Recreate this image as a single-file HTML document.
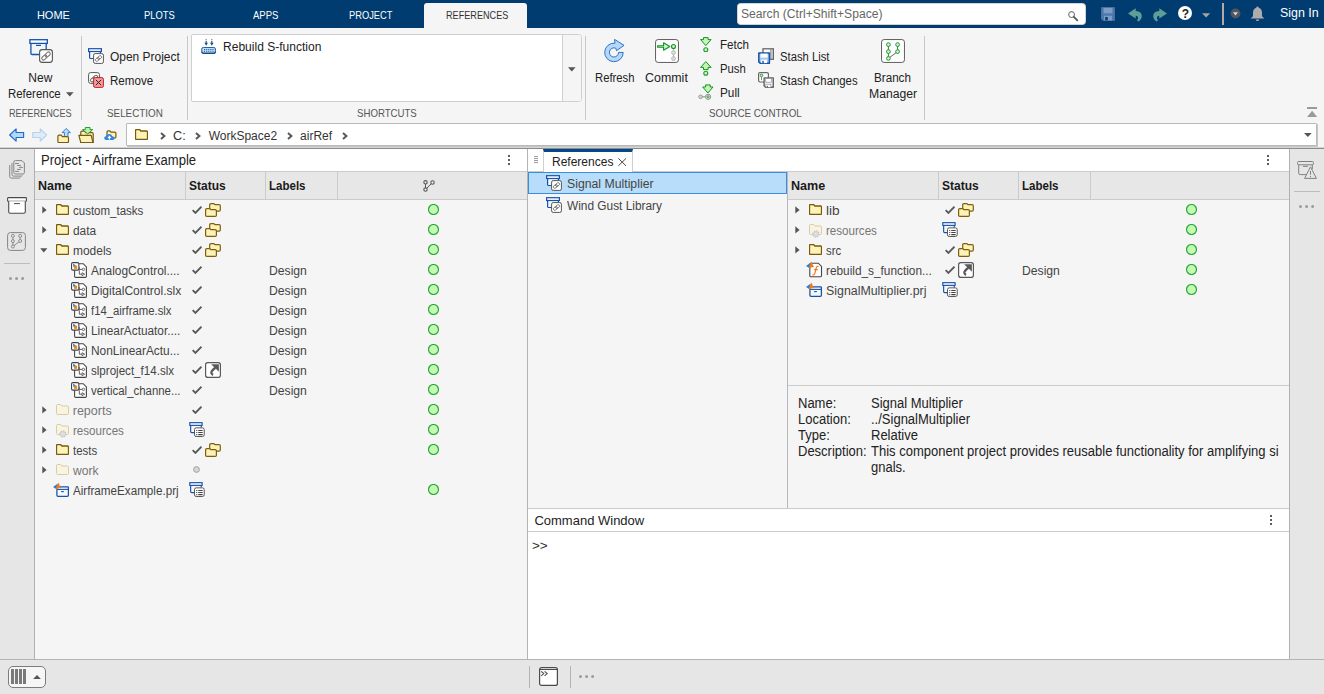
<!DOCTYPE html>
<html><head><meta charset="utf-8"><title>MATLAB</title>
<style>
html,body{margin:0;padding:0;}
body{width:1324px;height:694px;overflow:hidden;position:relative;background:#f5f5f5;font-family:"Liberation Sans",sans-serif;}
.t{position:absolute;white-space:nowrap;transform-origin:0 50%;display:block;}
.r{position:absolute;display:block;box-sizing:border-box;}
</style></head><body>
<svg width="0" height="0" style="position:absolute;left:-10px;top:-10px" aria-hidden="true">
<defs>
<!-- generic folder 13x11 -->
<symbol id="folder" viewBox="0 0 13 11" overflow="visible">
<path d="M0.5 1.6 Q0.5 0.5 1.6 0.5 H4.6 L5.9 2 H11.4 Q12.5 2 12.5 3.1 V9.4 Q12.5 10.5 11.4 10.5 H1.6 Q0.5 10.5 0.5 9.4 Z" fill="#fdf2b8" stroke="#785a0a" stroke-width="1.3"/>
</symbol>
<symbol id="folderf" viewBox="0 0 13 11" overflow="visible">
<path d="M0.5 1.6 Q0.5 0.5 1.6 0.5 H4.6 L5.9 2 H11.4 Q12.5 2 12.5 3.1 V9.4 Q12.5 10.5 11.4 10.5 H1.6 Q0.5 10.5 0.5 9.4 Z" fill="#f9f4df" stroke="#d6cda8" stroke-width="1"/>
</symbol>
<symbol id="folderg" viewBox="0 0 13 14" overflow="visible">
<path d="M0.5 1.6 Q0.5 0.5 1.6 0.5 H4.6 L5.9 2 H11.4 Q12.5 2 12.5 3.1 V9.4 Q12.5 10.5 11.4 10.5 H1.6 Q0.5 10.5 0.5 9.4 Z" fill="#f9f4df" stroke="#d6cda8" stroke-width="1"/>
<circle cx="6.9" cy="10" r="3.1" fill="#e6e6e6" stroke="#c2c2c2" stroke-width="1.1" stroke-dasharray="1.4 1"/>
<circle cx="6.9" cy="10" r="2.5" fill="#e2e2e2" stroke="#c6c6c6" stroke-width="0.6"/>
<circle cx="6.9" cy="10" r="1" fill="#f8f8f8" stroke="#c2c2c2" stroke-width="0.5"/>
</symbol>
<!-- double folder status 16x14 -->
<symbol id="dfolder" viewBox="0 0 16 14" overflow="visible">
<path d="M4.7 1.8 Q4.7 0.6 5.9 0.6 H8.8 L10 1.7 H14.1 Q15.3 1.7 15.3 2.9 V7 Q15.3 8.2 14.1 8.2 H5.9 Q4.7 8.2 4.7 7 Z" fill="#fdf2b8" stroke="#7d5f0c" stroke-width="1.2"/>
<path d="M0.6 6.8 Q0.6 5.6 1.8 5.6 H4.7 L5.9 6.7 H10.2 Q11.4 6.7 11.4 7.9 V12.2 Q11.4 13.4 10.2 13.4 H1.8 Q0.6 13.4 0.6 12.2 Z" fill="#fdf2b8" stroke="#7d5f0c" stroke-width="1.2"/>
</symbol>
<!-- check -->
<symbol id="check" viewBox="0 0 10 8" overflow="visible">
<path d="M0.6 4.1 L3.4 6.9 L9.5 0.7" fill="none" stroke="#5a5a5a" stroke-width="1.9"/>
</symbol>
<!-- green circle -->
<symbol id="gcirc" viewBox="0 0 11 11" overflow="visible">
<circle cx="5.5" cy="5.5" r="5" fill="#c3fbb3" stroke="#2ba83b" stroke-width="1.2"/>
</symbol>
<symbol id="scirc" viewBox="0 0 7 7" overflow="visible">
<circle cx="3.5" cy="3.5" r="2.9" fill="#d6d6d6" stroke="#9c9c9c" stroke-width="0.9"/>
</symbol>
<!-- tree arrows -->
<symbol id="arrr" viewBox="0 0 5 8" overflow="visible"><path d="M0.3 0.2 L4.8 4 L0.3 7.8 Z" fill="#555"/></symbol>
<symbol id="arrd" viewBox="0 0 8 5" overflow="visible"><path d="M0.2 0.3 L7.8 0.3 L4 4.8 Z" fill="#555"/></symbol>
<!-- slx model icon 16x16 -->
<symbol id="slx" viewBox="0 0 16 16" overflow="visible">
<path d="M7.9 1.7 H12.2 L15.4 4.9 V14.3 Q15.4 15.4 14.3 15.4 H4.7 Q3.6 15.4 3.6 14.3 V8" fill="#fff" stroke="#444" stroke-width="1.1"/>
<rect x="0.55" y="0.65" width="7.3" height="7.5" rx="1.3" fill="#fff" stroke="#444" stroke-width="1.1"/>
<path d="M2 1.7 L5 3.3 L2.4 5 Z" fill="#1f7fd8"/>
<rect x="3" y="3.7" width="3.1" height="3.1" fill="#e8861c"/>
<path d="M8.3 8.2 V12.2 H10.8 M8.3 7.4 H11.2" fill="none" stroke="#5a5a5a" stroke-width="1"/>
<path d="M8.3 5 V8" stroke="#5a5a5a" stroke-width="1"/>
<circle cx="12.4" cy="7.4" r="1.2" fill="#fff" stroke="#5a5a5a" stroke-width="0.9"/>
<path d="M11 10.7 L13.7 12.2 L11 13.7 Z" fill="#fff" stroke="#5a5a5a" stroke-width="0.9" stroke-linejoin="round"/>
</symbol>
<!-- prj icon 15x15 -->
<symbol id="prj" viewBox="0 0 17 16" overflow="visible">
<path d="M3.9 5.6 Q3.9 4.9 4.6 4.9 H14.7 Q15.4 4.9 15.4 5.6 V13.2 Q15.4 14.3 14.3 14.3 H5 Q3.9 14.3 3.9 13.2 Z" fill="#f4f8fd" stroke="#1552ab" stroke-width="1.25"/>
<path d="M3.9 7.4 H15.4" stroke="#1552ab" stroke-width="1.1"/>
<path d="M8.1 9.6 H10.9" stroke="#1552ab" stroke-width="1.1"/>
<path d="M0 5.1 L4.9 1.6 L3.2 7 Z" fill="#1f7fd8"/>
<path d="M5.5 0.8 L8 6.3 L5.8 6.1 L3.8 8.1 L3.1 7 L3.5 4.4 L4.4 2.2 Z" fill="#f07a1e"/>
</symbol>
<!-- m function file -->
<symbol id="mfile" viewBox="0 0 17 17" overflow="visible">
<path d="M3.8 3.3 Q3.8 2.2 4.9 2.2 H12.3 L15.5 5.4 V14.7 Q15.5 15.8 14.4 15.8 H4.9 Q3.8 15.8 3.8 14.7 Z" fill="#fff" stroke="#444" stroke-width="1.1"/>
<path d="M0 5.1 L4.9 1.6 L3.2 7 Z" fill="#1f7fd8"/>
<path d="M5.5 0.8 L8 6.3 L5.8 6.1 L3.8 8.1 L3.1 7 L3.5 4.4 L4.4 2.2 Z" fill="#f07a1e"/>
<path d="M12.6 5.6 Q10.8 4.7 10.2 7 L8.8 12.5 Q8.2 14.5 6.5 13.8 M8.1 8.6 H11.8" fill="none" stroke="#f07a1e" stroke-width="1.15"/>
</symbol>
<!-- shortcut status 16x16 -->
<symbol id="shortcut" viewBox="0 0 16 16" overflow="visible">
<rect x="0.6" y="0.6" width="14.8" height="14.8" rx="2.2" fill="#fff" stroke="#585858" stroke-width="1.2"/>
<path d="M6.1 2.2 H13.9 V9.7 Z" fill="#5a5a5a"/>
<path d="M10.4 5.8 Q6 9.2 6.4 11 Q6.8 12.3 8.1 12.8" fill="none" stroke="#5a5a5a" stroke-width="2.4"/>
</symbol>
<!-- project doc status 16x16 -->
<symbol id="pdoc" viewBox="0 0 16 16" overflow="visible">
<path d="M1.5 3.4 V10 Q1.5 11 2.5 11 H6 V5.6 H12.5 V3.4 Z" fill="#f4f8fd"/>
<path d="M1.5 3.4 V10 Q1.5 11 2.5 11 H6 M12.5 3.4 V5.6" fill="none" stroke="#1552ab" stroke-width="1.2"/>
<rect x="0.6" y="0.7" width="12.8" height="2.8" fill="#fff" stroke="#1552ab" stroke-width="1.2"/>
<rect x="5.5" y="6.1" width="10.1" height="9" rx="1.8" fill="#fff" stroke="#505050"/>
<path d="M7.3 8.9 H8.4 M9.4 8.9 H14 M7.3 11 H8.4 M9.4 11 H14 M7.3 13.1 H8.4 M9.4 13.1 H14" stroke="#444" stroke-width="1.1"/>
</symbol>
<!-- project link 16 -->
<symbol id="plink16" viewBox="0 0 16 16" overflow="visible">
<path d="M1.6 3.5 V9.4 Q1.6 10.5 2.7 10.5 H6 V5.6 H12.4 V3.5 Z" fill="#f4f8fd"/>
<path d="M1.6 3.5 V9.4 Q1.6 10.5 2.7 10.5 H6 M12.4 3.5 V5.6" fill="none" stroke="#1552ab" stroke-width="1.2"/>
<rect x="0.6" y="0.7" width="12.8" height="2.8" fill="#fff" stroke="#1552ab" stroke-width="1.2"/>
<rect x="5.6" y="5.6" width="9.8" height="9.8" rx="1.6" fill="#fff" stroke="#555"/>
<g transform="rotate(-40 10.5 10.5)" fill="none" stroke="#777" stroke-width="0.9"><rect x="6.9" y="9.1" width="4.4" height="2.8" rx="1.4"/><rect x="9.7" y="9.1" width="4.4" height="2.8" rx="1.4"/></g>
</symbol>
<!-- project link 24 -->
<symbol id="plink24" viewBox="0 0 24 24" overflow="visible">
<path d="M1.9 4.4 V14.2 Q1.9 15.5 3.2 15.5 H10.4 V10.4 H17.2 V4.4 Z" fill="#f1f6fd"/>
<path d="M1.9 4.4 V14.2 Q1.9 15.5 3.2 15.5 H10.4 M17.2 4.4 V10.4" fill="none" stroke="#1552ab" stroke-width="1.3"/>
<rect x="0.9" y="0.7" width="17.4" height="3.7" fill="#fff" stroke="#1552ab" stroke-width="1.3"/>
<path d="M7 6.4 H12" stroke="#1552ab" stroke-width="1.2"/>
<rect x="10.6" y="10.6" width="12.8" height="12.8" rx="2.6" fill="#fff" stroke="#555" stroke-width="1.1"/>
<g transform="rotate(-42 17 17)" fill="none" stroke="#777" stroke-width="1.05"><rect x="11.9" y="15.3" width="5.8" height="3.4" rx="1.7"/><rect x="16.3" y="15.3" width="5.8" height="3.4" rx="1.7"/></g>
</symbol>
<!-- remove 16 -->
<symbol id="remove16" viewBox="0 0 16 16" overflow="visible">
<rect x="0.6" y="0.6" width="10.8" height="10.8" rx="2" fill="#fff" stroke="#555"/>
<g transform="rotate(-40 6 6.6)" fill="none" stroke="#6a6a6a" stroke-width="1"><rect x="1.8" y="5" width="5" height="3.2" rx="1.6"/><rect x="5.2" y="5" width="5" height="3.2" rx="1.6"/></g>
<rect x="5.6" y="5.6" width="9.8" height="9.8" rx="1.6" fill="#f7999d" stroke="#b8242c"/>
<path d="M7.8 7.8 L13.2 13.2 M13.2 7.8 L7.8 13.2" stroke="#3a1a1a" stroke-width="1"/>
</symbol>
<!-- rebuild -->
<symbol id="rebuild" viewBox="0 0 16 16" overflow="visible">
<path d="M5.3 0.2 V1.2 M5.3 2 V4.6 M11.1 0.2 V1.2 M11.1 2 V4.6" stroke="#1a4a80" stroke-width="1.1"/>
<path d="M3.5 3.9 H7.1 L5.3 7 Z M9.3 3.9 H12.9 L11.1 7 Z" fill="#1a4a80"/>
<rect x="0.8" y="8.7" width="14" height="5.9" rx="1.6" fill="#bcdcf7" stroke="#1d5ca0"/>
<path d="M0.8 12.8 Q0.8 14.7 2.4 14.7 H13.2 Q14.8 14.7 14.8 12.8" fill="none" stroke="#154a82" stroke-width="1.3"/>
<path d="M3.2 10.8 H12.8 M3.2 12.6 H12.8" stroke="#1a4a80" stroke-width="1" stroke-dasharray="1 1.15"/>
</symbol>
<!-- refresh 24 -->
<symbol id="refresh" viewBox="0 0 21 24" overflow="visible">
<path d="M10.56 0.4 L20.3 6.5 L12.6 12 L11.9 9.5 A4.7 4.7 0 1 0 14.65 13.8 L19.45 13.8 A9.5 9.5 0 1 1 11 4.35 Z" fill="#b4d8f7" stroke="#2c6fc4" stroke-width="1" stroke-linejoin="round"/>
</symbol>
<!-- commit 24 -->
<symbol id="commit" viewBox="0 0 24 24" overflow="visible">
<rect x="0.55" y="0.55" width="22.9" height="22.9" rx="2.6" fill="#fff" stroke="#5e5e5e" stroke-width="1"/>
<path d="M18.5 9 V19" stroke="#b0b0b0" stroke-width="1"/>
<circle cx="18.5" cy="13.6" r="2" fill="#dadada" stroke="#b4b4b4" stroke-width="0.8"/>
<circle cx="18.5" cy="19.6" r="2" fill="#dadada" stroke="#b4b4b4" stroke-width="0.8"/>
<circle cx="18.5" cy="7.5" r="2" fill="#c9f7b8" stroke="#13912a" stroke-width="1.1"/>
<path d="M2.6 6.7 H8.6 V3.8 L14.8 7.5 L8.6 11.2 V8.3 H2.6 Z" fill="#d0fac2" stroke="#13912a" stroke-width="1.1" stroke-linejoin="round"/>
</symbol>
<!-- fetch/push/pull -->
<symbol id="fetch" viewBox="0 0 12 15" overflow="visible">
<path d="M3.5 0.6 H8.1 V2.6 H11.1 L5.8 8.6 L0.6 2.6 H3.5 Z" fill="#c4f6b2" stroke="#13912a" stroke-linejoin="round"/>
<circle cx="5.8" cy="12.8" r="2" fill="#c9f7b8" stroke="#1f9a2e" stroke-width="1.1"/>
</symbol>
<symbol id="push" viewBox="0 0 12 15" overflow="visible">
<path d="M5.8 0.6 L11.1 6.4 H8.1 V8.6 H3.5 V6.4 H0.6 Z" fill="#c4f6b2" stroke="#13912a" stroke-linejoin="round"/>
<circle cx="5.8" cy="12.3" r="2" fill="#c9f7b8" stroke="#1f9a2e" stroke-width="1.1"/>
</symbol>
<symbol id="pull" viewBox="0 0 16 16" overflow="visible">
<path d="M7.6 0.9 H12.2 V3 H15 L9.9 9 L4.7 3 H7.6 Z" fill="#c4f6b2" stroke="#13912a" stroke-linejoin="round"/>
<path d="M4 12.8 H7.4" stroke="#8e8e8e" stroke-width="1"/>
<circle cx="2.6" cy="12.8" r="1.8" fill="#d4d4d4" stroke="#8e8e8e" stroke-width="0.9"/>
<circle cx="10.1" cy="12.8" r="2.6" fill="#f0f0f0" stroke="#8e8e8e" stroke-width="1"/>
<circle cx="10.1" cy="12.8" r="1.1" fill="#c9f7b8" stroke="#1f9a2e" stroke-width="0.9"/>
</symbol>
<!-- floppy pieces -->
<symbol id="stashlist" viewBox="0 0 16 16" overflow="visible">
<rect x="5" y="0.8" width="10.5" height="10.5" fill="#fff" stroke="#666" stroke-width="1.3"/>
<path d="M12.7 1 V11 M14 1 V11" stroke="#8a8a8a" stroke-width="0.9"/>
<path d="M0.8 4.9 H11.4 V15.3 H2.2 L0.8 13.9 Z" fill="#a8c8f0" stroke="#1552ab" stroke-width="1.5" stroke-linejoin="round"/>
<rect x="2.6" y="5.6" width="7" height="4" fill="#fff"/>
<rect x="3.2" y="11.7" width="5.8" height="3.4" fill="#fff"/>
<rect x="4.3" y="12.8" width="1.4" height="2.4" fill="#1552ab"/>
</symbol>
<symbol id="stashch" viewBox="0 0 16 16" overflow="visible">
<rect x="0.6" y="0.6" width="9.8" height="9.4" rx="1.4" fill="#fff" stroke="#666" stroke-width="1.2"/>
<path d="M3.5 4.8 V8.2" stroke="#8a8a8a" stroke-width="1"/>
<circle cx="3.5" cy="3.4" r="1.3" fill="#c9f7b8" stroke="#13912a" stroke-width="0.9"/>
<path d="M6.1 5.9 H15.3 V15.2 H7.5 L6.1 13.8 Z" fill="#efefef" stroke="#666" stroke-width="1.4" stroke-linejoin="round"/>
<rect x="7.8" y="6.6" width="5.8" height="3.6" fill="#fff" stroke="#808080" stroke-width="0.6"/>
<rect x="7.9" y="12.7" width="5" height="2.5" fill="#fff" stroke="#808080" stroke-width="0.5"/>
<rect x="8.8" y="13.9" width="1.1" height="1.4" fill="#555"/>
</symbol>
<!-- branch manager 24 -->
<symbol id="branch" viewBox="0 0 24 24" overflow="visible">
<rect x="0.55" y="0.55" width="22.9" height="22.9" rx="2.6" fill="#fff" stroke="#5e5e5e" stroke-width="1"/>
<path d="M7.4 5.6 V19.4 M16.6 5.6 V12.6 L7.4 19.4" fill="none" stroke="#555" stroke-width="0.9"/>
<g fill="#c9f7b8" stroke="#13912a" stroke-width="0.9"><circle cx="7.4" cy="5.6" r="1.9"/><circle cx="7.4" cy="12.6" r="1.9"/><circle cx="7.4" cy="19.4" r="1.9"/><circle cx="16.6" cy="5.6" r="1.9"/><circle cx="16.6" cy="12.6" r="1.9"/></g>
</symbol>
<!-- nav arrows -->
<symbol id="navback" viewBox="0 0 16 14" overflow="visible">
<path d="M7.4 0.7 L0.7 7 L7.4 13.3 V9.6 H15.2 V4.4 H7.4 Z" fill="#b4d8f7" stroke="#2469c7" stroke-width="1.2" stroke-linejoin="round"/>
</symbol>
<symbol id="navfwd" viewBox="0 0 16 14" overflow="visible">
<path d="M8.6 0.7 L15.3 7 L8.6 13.3 V9.6 H0.8 V4.4 H8.6 Z" fill="#dfecf8" stroke="#b8d0ea" stroke-width="1.2" stroke-linejoin="round"/>
</symbol>
<symbol id="upfolder" viewBox="0 0 14 15.6" overflow="visible">
<path d="M9.2 0.5 L13.4 4.6 H11 V8.6 H7.4 V4.6 H5.1 Z" fill="#b5defc" stroke="#2d6fcf" stroke-width="0.9" stroke-linejoin="round"/>
<path d="M0.9 8.2 Q0.9 7.1 2 7.1 H4.2 L5.4 8.6 H10.4 Q11.5 8.6 11.5 9.7 V13.6 Q11.5 14.7 10.4 14.7 H2 Q0.9 14.7 0.9 13.6 Z" fill="#fdf2b8" stroke="#785a0a" stroke-width="1.2"/>
</symbol>
<symbol id="browsefolder" viewBox="0 0 16 16.5" overflow="visible">
<path d="M2.8 5.3 Q2.8 4.2 3.9 4.2 H6.6 L7.8 5.6 H14.1 Q15.2 5.6 15.2 6.7 V15.7 H2.8 Z" fill="#fdf2b8" stroke="#785a0a" stroke-width="1.2"/>
<path d="M7.3 0.5 H12 V2.6 H14.7 L9.65 7 L4.6 2.6 H7.3 Z" fill="#b9f2a4" stroke="#1a8f2a" stroke-width="0.9" stroke-linejoin="round"/>
<path d="M0.9 8.4 H13.2 L15 15.7 H2.8 Z" fill="#fdf2b8" stroke="#785a0a" stroke-width="1.2" stroke-linejoin="round"/>
</symbol>
<symbol id="cloudfolder" viewBox="0 0 13 10.5" overflow="visible">
<path d="M3 1.9 Q3 0.8 4.1 0.8 H5.8 L7 2.1 H10.8 Q11.9 2.1 11.9 3.2 V6.9 Q11.9 8 10.8 8 H3 Z" fill="#fdf2b8" stroke="#785a0a" stroke-width="1.2"/>
<path d="M2.4 9.9 Q0.2 9.9 0.2 7.9 Q0.3 6.3 2 6.2 Q2.8 4.1 5.2 4.1 Q7.6 4.2 8.2 6.3 Q10.6 6.4 10.6 8.2 Q10.5 9.9 8.6 9.9 Z" fill="#2e86de"/>
<path d="M5.4 5.6 L7.4 8 H6.1 V9.6 H4.7 V8 H3.4 Z" fill="#fff"/>
</symbol>
<symbol id="chev" viewBox="0 0 6 8" overflow="visible"><path d="M1 1 L4.4 4 L1 7" fill="none" stroke="#585858" stroke-width="2"/></symbol>
<symbol id="dd" viewBox="0 0 8 5" overflow="visible"><path d="M0.2 0.3 H7.8 L4 4.6 Z" fill="#555"/></symbol>
<!-- top-bar icons -->
<symbol id="mag" viewBox="0 0 11 11" overflow="visible">
<circle cx="3.6" cy="3.6" r="2.9" fill="none" stroke="#808080" stroke-width="1.2"/>
<path d="M5.9 5.9 L9.3 9.3" stroke="#5a5a5a" stroke-width="1.9" stroke-linecap="round"/>
</symbol>
<symbol id="save" viewBox="0 0 14 14" overflow="visible">
<path d="M0.5 0.5 H13.5 V13.5 H2 L0.5 12 Z" fill="#4e78aa" stroke="#456f9f" stroke-width="1"/>
<rect x="2.6" y="0.9" width="8.8" height="5.4" fill="#7c9ec4"/>
<rect x="3" y="8.8" width="8" height="4.6" fill="#7c9ec4"/>
<rect x="4.2" y="10" width="2.6" height="3.4" fill="#0d3d6e"/>
</symbol>
<symbol id="undo" viewBox="0 0 14 14" overflow="visible">
<path d="M0 5.4 L7.7 0.2 V3 Q13.8 3.2 13.8 8.2 Q13.6 11.6 10.4 13.4 L9 12.2 Q10.8 10.4 9.8 8.8 Q9.2 7.8 7.7 7.8 V10.4 Z" fill="#5f9e96"/>
</symbol>
<symbol id="redo" viewBox="0 0 14 14" overflow="visible">
<path d="M14 5.4 L6.3 0.2 V3 Q0.2 3.2 0.2 8.2 Q0.4 11.6 3.6 13.4 L5 12.2 Q3.2 10.4 4.2 8.8 Q4.8 7.8 6.3 7.8 V10.4 Z" fill="#5f9e96"/>
</symbol>
<symbol id="bell" viewBox="0 0 15 15" overflow="visible">
<path d="M7.5 0.4 Q8.6 0.4 8.7 1.5 Q12 2.6 12 6.6 V10 L14.4 12.4 H0.6 L3 10 V6.6 Q3 2.6 6.3 1.5 Q6.4 0.4 7.5 0.4 Z" fill="#adadad"/>
<path d="M5.6 13.2 H9.4 Q9 14.8 7.5 14.8 Q6 14.8 5.6 13.2 Z" fill="#adadad"/>
</symbol>
<!-- kebab -->
<symbol id="kebab" viewBox="0 0 2 10" overflow="visible"><rect x="0" y="0" width="2" height="2" fill="#5c5c5c"/><rect x="0" y="4" width="2" height="2" fill="#5c5c5c"/><rect x="0" y="8" width="2" height="2" fill="#5c5c5c"/></symbol>
<symbol id="hdots" viewBox="0 0 15 3" overflow="visible"><circle cx="1.5" cy="1.5" r="1.5" fill="#9c9c9c"/><circle cx="7.55" cy="1.5" r="1.5" fill="#9c9c9c"/><circle cx="13.6" cy="1.5" r="1.5" fill="#9c9c9c"/></symbol>
<!-- git header icon -->
<symbol id="gith" viewBox="0 0 13 13" overflow="visible">
<path d="M2.5 4 V8 M3.7 8.3 L8.3 3.7" fill="none" stroke="#5a5a5a" stroke-width="1"/>
<circle cx="2.5" cy="2.3" r="1.7" fill="#ececec" stroke="#5a5a5a" stroke-width="1.1"/>
<circle cx="2.5" cy="9.6" r="1.7" fill="#ececec" stroke="#5a5a5a" stroke-width="1.1"/>
<circle cx="9.5" cy="2.5" r="1.7" fill="#ececec" stroke="#5a5a5a" stroke-width="1.1"/>
</symbol>
<!-- left sidebar icons -->
<symbol id="sdocs" viewBox="0 0 17 19" overflow="visible">
<path d="M0.7 5 V16.6 Q0.7 18.1 2.2 18.1 H10.4 L11.6 17" fill="none" stroke="#858585" stroke-width="1"/>
<path d="M3 3 V14.6 Q3 16.1 4.5 16.1 H12.4 L13.6 15" fill="none" stroke="#858585" stroke-width="1"/>
<path d="M4.8 2.1 Q4.8 0.6 6.3 0.6 H13 L15.4 3 V12.5 Q15.4 14 13.9 14 H6.3 Q4.8 14 4.8 12.5 Z" fill="#e6e6e6" stroke="#858585" stroke-width="1"/>
<path d="M6.1 3.5 H9.9 M8.1 5.45 H11.9 M10.1 7.4 H13.9 M8.1 9.4 H11.9 M6.1 11.4 H9.9" stroke="#858585" stroke-width="1"/>
</symbol>
<symbol id="sbox" viewBox="0 0 20 17" overflow="visible">
<rect x="0.6" y="0.6" width="18.8" height="3.7" rx="0.6" fill="#fff" stroke="#4a4a4a" stroke-width="1.1"/>
<path d="M1.7 4.3 V14.8 Q1.7 16.3 3.2 16.3 H16.8 Q18.3 16.3 18.3 14.8 V4.3" fill="#fff" stroke="#4a4a4a" stroke-width="1.1"/>
<path d="M7 6.6 H13" stroke="#4a4a4a" stroke-width="1"/>
</symbol>
<symbol id="sbranch" viewBox="0 0 19 19" overflow="visible">
<rect x="0.6" y="0.6" width="17.8" height="17.8" rx="2.8" fill="#e6e6e6" stroke="#858585" stroke-width="1"/>
<path d="M5.9 4 V14.4 M13.2 4 V9 L5.9 14.4" fill="none" stroke="#858585" stroke-width="0.9"/>
<g fill="#e6e6e6" stroke="#858585" stroke-width="0.9"><circle cx="5.9" cy="3.9" r="1.5"/><circle cx="5.9" cy="9.1" r="1.5"/><circle cx="5.9" cy="14.5" r="1.5"/><circle cx="13.2" cy="3.9" r="1.5"/><circle cx="13.2" cy="9" r="1.5"/></g>
</symbol>
<symbol id="swarn" viewBox="0 0 20 18" overflow="visible">
<rect x="0.6" y="0.5" width="15.8" height="3.3" rx="0.9" fill="#e6e6e6" stroke="#808080" stroke-width="1"/>
<path d="M1.7 3.8 V12.2 Q1.7 13.6 3.1 13.6 H9.6 M15.3 3.8 V8" fill="none" stroke="#808080" stroke-width="1"/>
<path d="M6 5.3 H11" stroke="#808080" stroke-width="1"/>
<path d="M13.5 5.9 L19.4 17.4 H7.6 Z" fill="#e6e6e6" stroke="#808080" stroke-width="1" stroke-linejoin="round"/>
<path d="M13.5 10 V13.8 M13.5 15 V16.2" stroke="#808080" stroke-width="1"/>
</symbol>
<symbol id="cmdwin" viewBox="0 0 19 19" overflow="visible">
<rect x="0.6" y="0.6" width="17.8" height="17.8" rx="2" fill="#fff" stroke="#4a4a4a" stroke-width="1.2"/>
<path d="M0.6 2.5 H18.4" stroke="#4a4a4a" stroke-width="1"/>
<path d="M2.2 4.3 L4.8 6.6 L2.2 8.9 M5.6 4.3 L8.2 6.6 L5.6 8.9" fill="none" stroke="#505050" stroke-width="1.1"/>
</symbol>
<symbol id="collapse" viewBox="0 0 10.2 10.2" overflow="visible"><path d="M0 1 H10.2" stroke="#9a9a9a" stroke-width="2"/><path d="M5.1 3.8 L10.2 10.1 H0 Z" fill="#9a9a9a"/></symbol>
</defs>
</svg>

<div class="r" style="left:0px;top:0px;width:1324px;height:28px;background:#013c70;"></div>
<div class="r" style="left:424px;top:3px;width:103px;height:26px;background:#f5f5f5;border-radius:3px 3px 0 0;"></div>
<span class="t" id="t0" style="left:36.93px;top:9.00px;font-size:11px;line-height:12px;height:12px;color:#fff;">HOME</span>
<span class="t" id="t1" style="left:143.54px;top:9.00px;font-size:11px;line-height:12px;height:12px;color:#fff;transform:scaleX(0.8563);">PLOTS</span>
<span class="t" id="t2" style="left:252.50px;top:9.00px;font-size:11px;line-height:12px;height:12px;color:#fff;transform:scaleX(0.8683);">APPS</span>
<span class="t" id="t3" style="left:348.93px;top:9.00px;font-size:11px;line-height:12px;height:12px;color:#fff;transform:scaleX(0.8459);">PROJECT</span>
<span class="t" id="t4" style="left:446.46px;top:9.00px;font-size:11px;line-height:12px;height:12px;color:#333;transform:scaleX(0.8285);">REFERENCES</span>
<div class="r" style="left:736.5px;top:3px;width:349px;height:21.5px;background:#fff;border-radius:3.5px;border:1px solid #d6d2ce;"></div>
<span class="t" id="t5" style="left:741.00px;top:7.00px;font-size:12px;line-height:14px;height:14px;color:#666;transform:scaleX(1.0100);">Search (Ctrl+Shift+Space)</span>
<svg class="r" style="left:1067.8px;top:11px;" width="11" height="11"><use href="#mag"/></svg>
<svg class="r" style="left:1100.5px;top:6.5px;" width="14" height="14"><use href="#save"/></svg>
<svg class="r" style="left:1127.5px;top:8px;" width="14" height="14"><use href="#undo"/></svg>
<svg class="r" style="left:1152.5px;top:8px;" width="14" height="14"><use href="#redo"/></svg>
<div class="r" style="left:1178.3px;top:6.2px;width:14px;height:14px;border-radius:50%;background:#fff;"></div>
<span class="t" id="t6" style="left:1181.70px;top:7.00px;font-size:12px;line-height:14px;height:14px;color:#222;font-weight:bold;">?</span>
<svg class="r" style="left:1202px;top:12.6px" width="9" height="5"><path d="M0 0.2H8.2L4.1 4.6Z" fill="#a5a3a0"/></svg>
<div class="r" style="left:1222.2px;top:3px;width:1.7px;height:22px;background:#b3aaa7;"></div>
<svg class="r" style="left:1230px;top:8.2px" width="11" height="11"><circle cx="5.5" cy="5.5" r="4.9" fill="#4f5660"/><path d="M2.9 4.2H8.1L5.5 7.4Z" fill="#d5d9dd"/></svg>
<svg class="r" style="left:1250px;top:5.6px;" width="15" height="15.4"><use href="#bell"/></svg>
<span class="t" id="t7" style="left:1279.85px;top:6.00px;font-size:12px;line-height:14px;height:14px;color:#fff;transform:scaleX(1.0349);">Sign In</span>
<div class="r" style="left:0px;top:28px;width:1324px;height:95px;background:#f5f5f5;"></div>
<div class="r" style="left:81px;top:36px;width:1px;height:84px;background:#c8c8c8;"></div>
<div class="r" style="left:187px;top:36px;width:1px;height:84px;background:#c8c8c8;"></div>
<div class="r" style="left:585px;top:36px;width:1px;height:84px;background:#c8c8c8;"></div>
<div class="r" style="left:924px;top:36px;width:1px;height:84px;background:#c8c8c8;"></div>
<svg class="r" style="left:29px;top:39px;" width="24" height="24"><use href="#plink24"/></svg>
<span class="t" id="t8" style="left:28.36px;top:71.00px;font-size:12px;line-height:14px;height:14px;color:#222;">New</span>
<span class="t" id="t9" style="left:8.04px;top:87.00px;font-size:12px;line-height:14px;height:14px;color:#222;transform:scaleX(0.9516);">Reference</span>
<svg class="r" style="left:66px;top:92px" width="8" height="5"><path d="M0 0.2H7.6L3.8 4.4Z" fill="#555"/></svg>
<span class="t" id="t10" style="left:9.16px;top:107.00px;font-size:11px;line-height:12px;height:12px;color:#555;transform:scaleX(0.8329);">REFERENCES</span>
<svg class="r" style="left:88px;top:48px;" width="16" height="16"><use href="#plink16"/></svg>
<span class="t" id="t11" style="left:110.12px;top:50.00px;font-size:12px;line-height:14px;height:14px;color:#222;transform:scaleX(0.9954);">Open Project</span>
<svg class="r" style="left:88px;top:72px;" width="16" height="16"><use href="#remove16"/></svg>
<span class="t" id="t12" style="left:110.18px;top:74.00px;font-size:12px;line-height:14px;height:14px;color:#222;transform:scaleX(0.9653);">Remove</span>
<span class="t" id="t13" style="left:106.91px;top:107.00px;font-size:11px;line-height:12px;height:12px;color:#555;transform:scaleX(0.8949);">SELECTION</span>
<div class="r" style="left:191px;top:34px;width:390.5px;height:68px;background:#fff;border:1px solid #cfcfcf;border-radius:2px 3.5px 3.5px 2px;"></div>
<div class="r" style="left:562px;top:35px;width:18.5px;height:66px;background:#f5f5f5;border-left:1px solid #cfcfcf;border-radius:0 2.5px 2.5px 0;"></div>
<svg class="r" style="left:567.8px;top:66.8px" width="8" height="5"><path d="M0 0.2H7.6L3.8 4.4Z" fill="#555"/></svg>
<svg class="r" style="left:200.6px;top:38.6px;" width="15.6" height="15.6"><use href="#rebuild"/></svg>
<span class="t" id="t14" style="left:223.03px;top:40.00px;font-size:12px;line-height:14px;height:14px;color:#222;transform:scaleX(1.0033);">Rebuild S-function</span>
<span class="t" id="t15" style="left:357.32px;top:107.00px;font-size:11px;line-height:12px;height:12px;color:#555;transform:scaleX(0.8758);">SHORTCUTS</span>
<svg class="r" style="left:603.6px;top:39.4px;" width="21" height="23.4"><use href="#refresh"/></svg>
<span class="t" id="t16" style="left:594.51px;top:71.00px;font-size:12px;line-height:14px;height:14px;color:#222;transform:scaleX(0.9398);">Refresh</span>
<svg class="r" style="left:655px;top:39px;" width="24" height="24"><use href="#commit"/></svg>
<span class="t" id="t17" style="left:645.04px;top:71.00px;font-size:12px;line-height:14px;height:14px;color:#222;transform:scaleX(1.0363);">Commit</span>
<svg class="r" style="left:699.8px;top:36.9px;" width="12" height="15"><use href="#fetch"/></svg>
<span class="t" id="t18" style="left:720.30px;top:38.00px;font-size:12px;line-height:14px;height:14px;color:#222;transform:scaleX(0.9671);">Fetch</span>
<svg class="r" style="left:699.8px;top:61.2px;" width="12" height="15"><use href="#push"/></svg>
<span class="t" id="t19" style="left:720.18px;top:62.00px;font-size:12px;line-height:14px;height:14px;color:#222;transform:scaleX(0.9412);">Push</span>
<svg class="r" style="left:697.6px;top:83.8px;" width="16" height="16"><use href="#pull"/></svg>
<span class="t" id="t20" style="left:720.37px;top:86.00px;font-size:12px;line-height:14px;height:14px;color:#222;transform:scaleX(0.9809);">Pull</span>
<svg class="r" style="left:758px;top:48px;" width="16" height="16"><use href="#stashlist"/></svg>
<span class="t" id="t21" style="left:780.13px;top:50.00px;font-size:12px;line-height:14px;height:14px;color:#222;transform:scaleX(0.9384);">Stash List</span>
<svg class="r" style="left:758px;top:72px;" width="16" height="16"><use href="#stashch"/></svg>
<span class="t" id="t22" style="left:779.75px;top:74.00px;font-size:12px;line-height:14px;height:14px;color:#222;transform:scaleX(0.9456);">Stash Changes</span>
<svg class="r" style="left:881px;top:39px;" width="24" height="24"><use href="#branch"/></svg>
<span class="t" id="t23" style="left:874.39px;top:71.00px;font-size:12px;line-height:14px;height:14px;color:#222;transform:scaleX(0.9710);">Branch</span>
<span class="t" id="t24" style="left:869.38px;top:87.00px;font-size:12px;line-height:14px;height:14px;color:#222;transform:scaleX(1.0159);">Manager</span>
<span class="t" id="t25" style="left:709.01px;top:107.00px;font-size:11px;line-height:12px;height:12px;color:#555;transform:scaleX(0.8932);">SOURCE CONTROL</span>
<svg class="r" style="left:1307px;top:107px;" width="10.2" height="10.2"><use href="#collapse"/></svg>
<div class="r" style="left:0px;top:123.5px;width:1324px;height:24px;background:#f5f5f5;"></div>
<svg class="r" style="left:9.2px;top:128px;" width="15.4" height="14"><use href="#navback"/></svg>
<svg class="r" style="left:31.8px;top:128px;" width="15.4" height="14"><use href="#navfwd"/></svg>
<svg class="r" style="left:56.8px;top:127.6px;" width="14" height="15.6"><use href="#upfolder"/></svg>
<svg class="r" style="left:78px;top:126.6px;" width="16" height="16.5"><use href="#browsefolder"/></svg>
<svg class="r" style="left:103.6px;top:130px;" width="13" height="10.5"><use href="#cloudfolder"/></svg>
<div class="r" style="left:126px;top:123px;width:1191px;height:23px;background:#fff;border:1px solid #b9b9b9;border-radius:1px;box-shadow:1px 1px 0 #c6c6c6;"></div>
<svg class="r" style="left:135px;top:129px;" width="13" height="11"><use href="#folder"/></svg>
<svg class="r" style="left:159.55px;top:132.2px;" width="6" height="8"><use href="#chev"/></svg>
<span class="t" id="t26" style="left:173.19px;top:129.00px;font-size:12px;line-height:14px;height:14px;color:#333;transform:scaleX(1.0542);">C:</span>
<svg class="r" style="left:194.55px;top:132.2px;" width="6" height="8"><use href="#chev"/></svg>
<span class="t" id="t27" style="left:208.65px;top:129.00px;font-size:12px;line-height:14px;height:14px;color:#333;">WorkSpace2</span>
<svg class="r" style="left:286.55px;top:132.2px;" width="6" height="8"><use href="#chev"/></svg>
<span class="t" id="t28" style="left:300.06px;top:129.00px;font-size:12px;line-height:14px;height:14px;color:#333;">airRef</span>
<svg class="r" style="left:341.55px;top:132.2px;" width="6" height="8"><use href="#chev"/></svg>
<svg class="r" style="left:1304.2px;top:133px" width="8" height="5"><path d="M0 0H7.7L3.85 4Z" fill="#555"/></svg>
<div class="r" style="left:0px;top:147px;width:1324px;height:1px;background:#d4d4d4;"></div>
<div class="r" style="left:0px;top:148px;width:1324px;height:1px;background:#8c8c8c;"></div>
<div class="r" style="left:0px;top:149px;width:35px;height:510px;background:#e6e6e6;border-right:1px solid #b0b0b0;"></div>
<svg class="r" style="left:9px;top:160px;" width="17" height="19"><use href="#sdocs"/></svg>
<svg class="r" style="left:7px;top:197px;" width="20" height="17"><use href="#sbox"/></svg>
<svg class="r" style="left:7px;top:232px;" width="19" height="19"><use href="#sbranch"/></svg>
<div class="r" style="left:4px;top:263px;width:26px;height:1px;background:#bdbdbd;"></div>
<svg class="r" style="left:8.8px;top:277.1px;" width="15" height="3"><use href="#hdots"/></svg>
<div class="r" style="left:1289px;top:149px;width:35px;height:510px;background:#e6e6e6;border-left:1px solid #b0b0b0;"></div>
<svg class="r" style="left:1297px;top:161px;" width="20" height="18"><use href="#swarn"/></svg>
<div class="r" style="left:1294px;top:191px;width:26px;height:1px;background:#bdbdbd;"></div>
<svg class="r" style="left:1298.9px;top:205px;" width="15" height="3"><use href="#hdots"/></svg>
<div class="r" style="left:35px;top:149px;width:493px;height:510px;background:#f5f5f5;"></div>
<div class="r" style="left:35px;top:149px;width:493px;height:22px;background:#fff;"></div>
<div class="r" style="left:35px;top:171px;width:493px;height:1px;background:#cbcbcb;"></div>
<span class="t" id="t29" style="left:40.84px;top:152.00px;font-size:14px;line-height:16px;height:16px;color:#222;transform:scaleX(0.9311);">Project - Airframe Example</span>
<svg class="r" style="left:508px;top:155px;" width="2" height="10"><use href="#kebab"/></svg>
<div class="r" style="left:35px;top:172px;width:492px;height:27px;background:#e7e7e7;"></div>
<div class="r" style="left:35px;top:199px;width:492px;height:1px;background:#cbcbcb;"></div>
<div class="r" style="left:185px;top:172px;width:1px;height:27px;background:#cbcbcb;"></div>
<div class="r" style="left:265px;top:172px;width:1px;height:27px;background:#cbcbcb;"></div>
<div class="r" style="left:337px;top:172px;width:1px;height:27px;background:#cbcbcb;"></div>
<span class="t" id="t30" style="left:38.46px;top:179.00px;font-size:12px;line-height:14px;height:14px;color:#1a1a1a;font-weight:bold;transform:scaleX(1.0407);">Name</span>
<span class="t" id="t31" style="left:189.02px;top:179.00px;font-size:12px;line-height:14px;height:14px;color:#1a1a1a;font-weight:bold;">Status</span>
<span class="t" id="t32" style="left:269.03px;top:179.00px;font-size:12px;line-height:14px;height:14px;color:#1a1a1a;font-weight:bold;transform:scaleX(0.9601);">Labels</span>
<svg class="r" style="left:423px;top:180px;" width="13" height="13"><use href="#gith"/></svg>
<div class="r" style="left:527px;top:149px;width:1px;height:510px;background:#b8b8b8;"></div>
<svg class="r" style="left:41.8px;top:206.2px;" width="4.8" height="7.8"><use href="#arrr"/></svg>
<svg class="r" style="left:55.6px;top:204.1px;" width="13" height="11"><use href="#folder"/></svg>
<span class="t" id="t33" style="left:72.68px;top:204.00px;font-size:12.5px;line-height:14px;height:14px;color:#444;transform:scaleX(0.9195);">custom_tasks</span>
<svg class="r" style="left:192.0px;top:206px;" width="10" height="8"><use href="#check"/></svg>
<svg class="r" style="left:205.0px;top:203px;" width="16" height="14"><use href="#dfolder"/></svg>
<svg class="r" style="left:427.9px;top:204px;" width="11" height="11"><use href="#gcirc"/></svg>
<svg class="r" style="left:41.8px;top:226.2px;" width="4.8" height="7.8"><use href="#arrr"/></svg>
<svg class="r" style="left:55.6px;top:224.1px;" width="13" height="11"><use href="#folder"/></svg>
<span class="t" id="t34" style="left:72.65px;top:224.00px;font-size:12.5px;line-height:14px;height:14px;color:#444;transform:scaleX(0.9506);">data</span>
<svg class="r" style="left:192.0px;top:226px;" width="10" height="8"><use href="#check"/></svg>
<svg class="r" style="left:205.0px;top:223px;" width="16" height="14"><use href="#dfolder"/></svg>
<svg class="r" style="left:427.9px;top:224px;" width="11" height="11"><use href="#gcirc"/></svg>
<svg class="r" style="left:40.4px;top:248.2px;" width="7.6" height="4.8"><use href="#arrd"/></svg>
<svg class="r" style="left:55.6px;top:244.1px;" width="13" height="11"><use href="#folder"/></svg>
<span class="t" id="t35" style="left:72.65px;top:244.00px;font-size:12.5px;line-height:14px;height:14px;color:#444;transform:scaleX(0.9561);">models</span>
<svg class="r" style="left:192.0px;top:246px;" width="10" height="8"><use href="#check"/></svg>
<svg class="r" style="left:205.0px;top:243px;" width="16" height="14"><use href="#dfolder"/></svg>
<svg class="r" style="left:427.9px;top:244px;" width="11" height="11"><use href="#gcirc"/></svg>
<svg class="r" style="left:71px;top:262px;" width="16" height="16"><use href="#slx"/></svg>
<span class="t" id="t36" style="left:91.16px;top:264.00px;font-size:12.5px;line-height:14px;height:14px;color:#444;transform:scaleX(0.9520);">AnalogControl....</span>
<svg class="r" style="left:192.0px;top:266px;" width="10" height="8"><use href="#check"/></svg>
<span class="t" id="t37" style="left:268.55px;top:264.00px;font-size:12.5px;line-height:14px;height:14px;color:#444;transform:scaleX(0.9733);">Design</span>
<svg class="r" style="left:427.9px;top:264px;" width="11" height="11"><use href="#gcirc"/></svg>
<svg class="r" style="left:71px;top:282px;" width="16" height="16"><use href="#slx"/></svg>
<span class="t" id="t38" style="left:91.03px;top:284.00px;font-size:12.5px;line-height:14px;height:14px;color:#444;transform:scaleX(0.9621);">DigitalControl.slx</span>
<svg class="r" style="left:192.0px;top:286px;" width="10" height="8"><use href="#check"/></svg>
<span class="t" id="t39" style="left:268.55px;top:284.00px;font-size:12.5px;line-height:14px;height:14px;color:#444;transform:scaleX(0.9733);">Design</span>
<svg class="r" style="left:427.9px;top:284px;" width="11" height="11"><use href="#gcirc"/></svg>
<svg class="r" style="left:71px;top:302px;" width="16" height="16"><use href="#slx"/></svg>
<span class="t" id="t40" style="left:91.03px;top:304.00px;font-size:12.5px;line-height:14px;height:14px;color:#444;transform:scaleX(0.9055);">f14_airframe.slx</span>
<svg class="r" style="left:192.0px;top:306px;" width="10" height="8"><use href="#check"/></svg>
<span class="t" id="t41" style="left:268.55px;top:304.00px;font-size:12.5px;line-height:14px;height:14px;color:#444;transform:scaleX(0.9733);">Design</span>
<svg class="r" style="left:427.9px;top:304px;" width="11" height="11"><use href="#gcirc"/></svg>
<svg class="r" style="left:71px;top:322px;" width="16" height="16"><use href="#slx"/></svg>
<span class="t" id="t42" style="left:91.19px;top:324.00px;font-size:12.5px;line-height:14px;height:14px;color:#444;transform:scaleX(0.9457);">LinearActuator....</span>
<svg class="r" style="left:192.0px;top:326px;" width="10" height="8"><use href="#check"/></svg>
<span class="t" id="t43" style="left:268.55px;top:324.00px;font-size:12.5px;line-height:14px;height:14px;color:#444;transform:scaleX(0.9733);">Design</span>
<svg class="r" style="left:427.9px;top:324px;" width="11" height="11"><use href="#gcirc"/></svg>
<svg class="r" style="left:71px;top:342px;" width="16" height="16"><use href="#slx"/></svg>
<span class="t" id="t44" style="left:90.79px;top:344.00px;font-size:12.5px;line-height:14px;height:14px;color:#444;transform:scaleX(0.9522);">NonLinearActu...</span>
<svg class="r" style="left:192.0px;top:346px;" width="10" height="8"><use href="#check"/></svg>
<span class="t" id="t45" style="left:268.55px;top:344.00px;font-size:12.5px;line-height:14px;height:14px;color:#444;transform:scaleX(0.9733);">Design</span>
<svg class="r" style="left:427.9px;top:344px;" width="11" height="11"><use href="#gcirc"/></svg>
<svg class="r" style="left:71px;top:362px;" width="16" height="16"><use href="#slx"/></svg>
<span class="t" id="t46" style="left:91.32px;top:364.00px;font-size:12.5px;line-height:14px;height:14px;color:#444;transform:scaleX(0.9265);">slproject_f14.slx</span>
<svg class="r" style="left:192.0px;top:366px;" width="10" height="8"><use href="#check"/></svg>
<svg class="r" style="left:205.0px;top:362px;" width="16" height="16"><use href="#shortcut"/></svg>
<span class="t" id="t47" style="left:268.55px;top:364.00px;font-size:12.5px;line-height:14px;height:14px;color:#444;transform:scaleX(0.9733);">Design</span>
<svg class="r" style="left:427.9px;top:364px;" width="11" height="11"><use href="#gcirc"/></svg>
<svg class="r" style="left:71px;top:382px;" width="16" height="16"><use href="#slx"/></svg>
<span class="t" id="t48" style="left:90.95px;top:384.00px;font-size:12.5px;line-height:14px;height:14px;color:#444;transform:scaleX(0.9132);">vertical_channe...</span>
<svg class="r" style="left:192.0px;top:386px;" width="10" height="8"><use href="#check"/></svg>
<span class="t" id="t49" style="left:268.55px;top:384.00px;font-size:12.5px;line-height:14px;height:14px;color:#444;transform:scaleX(0.9733);">Design</span>
<svg class="r" style="left:427.9px;top:384px;" width="11" height="11"><use href="#gcirc"/></svg>
<svg class="r" style="left:41.8px;top:406.2px;" width="4.8" height="7.8"><use href="#arrr"/></svg>
<svg class="r" style="left:55.6px;top:404.1px;" width="13" height="11"><use href="#folderf"/></svg>
<span class="t" id="t50" style="left:72.76px;top:404.00px;font-size:12.5px;line-height:14px;height:14px;color:#757575;">reports</span>
<svg class="r" style="left:192.0px;top:406px;" width="10" height="8"><use href="#check"/></svg>
<svg class="r" style="left:427.9px;top:404px;" width="11" height="11"><use href="#gcirc"/></svg>
<svg class="r" style="left:41.8px;top:426.2px;" width="4.8" height="7.8"><use href="#arrr"/></svg>
<svg class="r" style="left:55.6px;top:424.1px;" width="13" height="14"><use href="#folderg"/></svg>
<span class="t" id="t51" style="left:72.66px;top:424.00px;font-size:12.5px;line-height:14px;height:14px;color:#757575;transform:scaleX(0.9275);">resources</span>
<svg class="r" style="left:189.10000000000002px;top:422.2px;" width="15.8" height="15.4"><use href="#pdoc"/></svg>
<svg class="r" style="left:427.9px;top:424px;" width="11" height="11"><use href="#gcirc"/></svg>
<svg class="r" style="left:41.8px;top:446.2px;" width="4.8" height="7.8"><use href="#arrr"/></svg>
<svg class="r" style="left:55.6px;top:444.1px;" width="13" height="11"><use href="#folder"/></svg>
<span class="t" id="t52" style="left:73.11px;top:444.00px;font-size:12.5px;line-height:14px;height:14px;color:#444;transform:scaleX(0.9154);">tests</span>
<svg class="r" style="left:192.0px;top:446px;" width="10" height="8"><use href="#check"/></svg>
<svg class="r" style="left:205.0px;top:443px;" width="16" height="14"><use href="#dfolder"/></svg>
<svg class="r" style="left:427.9px;top:444px;" width="11" height="11"><use href="#gcirc"/></svg>
<svg class="r" style="left:41.8px;top:466.2px;" width="4.8" height="7.8"><use href="#arrr"/></svg>
<svg class="r" style="left:55.6px;top:464.1px;" width="13" height="11"><use href="#folderf"/></svg>
<span class="t" id="t53" style="left:72.62px;top:464.00px;font-size:12.5px;line-height:14px;height:14px;color:#757575;transform:scaleX(0.9674);">work</span>
<svg class="r" style="left:193.0px;top:466.4px;" width="7" height="7"><use href="#scirc"/></svg>
<svg class="r" style="left:53px;top:481.8px;" width="17" height="16"><use href="#prj"/></svg>
<span class="t" id="t54" style="left:72.75px;top:484.00px;font-size:12.5px;line-height:14px;height:14px;color:#444;transform:scaleX(0.9328);">AirframeExample.prj</span>
<svg class="r" style="left:189.10000000000002px;top:482.2px;" width="15.8" height="15.4"><use href="#pdoc"/></svg>
<svg class="r" style="left:427.9px;top:484px;" width="11" height="11"><use href="#gcirc"/></svg>
<div class="r" style="left:528px;top:149px;width:761px;height:22px;background:#fff;"></div>
<div class="r" style="left:528px;top:171px;width:761px;height:1px;background:#cbcbcb;"></div>
<div class="r" style="left:534px;top:156px;width:4px;height:1px;background:#9a9a9a;"></div>
<div class="r" style="left:534px;top:158px;width:4px;height:1px;background:#9a9a9a;"></div>
<div class="r" style="left:534px;top:160px;width:4px;height:1px;background:#9a9a9a;"></div>
<div class="r" style="left:534px;top:162px;width:4px;height:1px;background:#9a9a9a;"></div>
<div class="r" style="left:543px;top:149px;width:89.5px;height:23px;background:#fff;border-left:1px solid #cfcfcf;border-right:1px solid #cfcfcf;border-top:3px solid #05488a;"></div>
<span class="t" id="t55" style="left:552.35px;top:155.00px;font-size:12.5px;line-height:14px;height:14px;color:#222;transform:scaleX(0.9609);">References</span>
<svg class="r" style="left:617.8px;top:157.8px" width="9" height="9"><path d="M0.4 0.4L8 7.8M8 0.4L0.4 7.8" stroke="#444" stroke-width="1"/></svg>
<svg class="r" style="left:1267px;top:155px;" width="2" height="10"><use href="#kebab"/></svg>
<div class="r" style="left:528px;top:172px;width:260px;height:336px;background:#f5f5f5;"></div>
<div class="r" style="left:528px;top:172px;width:259px;height:22px;background:#b8ddfa;border:1px solid #3a8ee0;"></div>
<svg class="r" style="left:546px;top:175.4px;" width="16" height="16"><use href="#plink16"/></svg>
<span class="t" id="t56" style="left:566.95px;top:177.00px;font-size:12.5px;line-height:14px;height:14px;color:#444;transform:scaleX(0.9808);">Signal Multiplier</span>
<svg class="r" style="left:546px;top:196.7px;" width="16" height="16"><use href="#plink16"/></svg>
<span class="t" id="t57" style="left:567.16px;top:199.00px;font-size:12.5px;line-height:14px;height:14px;color:#444;transform:scaleX(0.9491);">Wind Gust Library</span>
<div class="r" style="left:787px;top:172px;width:1px;height:336px;background:#b8b8b8;"></div>
<div class="r" style="left:788px;top:172px;width:501px;height:27px;background:#e7e7e7;"></div>
<div class="r" style="left:788px;top:199px;width:501px;height:1px;background:#cbcbcb;"></div>
<div class="r" style="left:938px;top:172px;width:1px;height:27px;background:#cbcbcb;"></div>
<div class="r" style="left:1018px;top:172px;width:1px;height:27px;background:#cbcbcb;"></div>
<div class="r" style="left:1090px;top:172px;width:1px;height:27px;background:#cbcbcb;"></div>
<span class="t" id="t58" style="left:790.98px;top:179.00px;font-size:12px;line-height:14px;height:14px;color:#1a1a1a;font-weight:bold;transform:scaleX(1.0485);">Name</span>
<span class="t" id="t59" style="left:942.02px;top:179.00px;font-size:12px;line-height:14px;height:14px;color:#1a1a1a;font-weight:bold;">Status</span>
<span class="t" id="t60" style="left:1022.03px;top:179.00px;font-size:12px;line-height:14px;height:14px;color:#1a1a1a;font-weight:bold;transform:scaleX(0.9601);">Labels</span>
<svg class="r" style="left:794.8px;top:206.2px;" width="4.8" height="7.8"><use href="#arrr"/></svg>
<svg class="r" style="left:808.6px;top:204.1px;" width="13" height="11"><use href="#folder"/></svg>
<span class="t" id="t61" style="left:825.55px;top:204.00px;font-size:12.5px;line-height:14px;height:14px;color:#444;transform:scaleX(1.0940);">lib</span>
<svg class="r" style="left:945.0px;top:206px;" width="10" height="8"><use href="#check"/></svg>
<svg class="r" style="left:958.0px;top:203px;" width="16" height="14"><use href="#dfolder"/></svg>
<svg class="r" style="left:1185.9px;top:204px;" width="11" height="11"><use href="#gcirc"/></svg>
<svg class="r" style="left:794.8px;top:226.2px;" width="4.8" height="7.8"><use href="#arrr"/></svg>
<svg class="r" style="left:808.6px;top:224.1px;" width="13" height="14"><use href="#folderg"/></svg>
<span class="t" id="t62" style="left:825.66px;top:224.00px;font-size:12.5px;line-height:14px;height:14px;color:#757575;transform:scaleX(0.9275);">resources</span>
<svg class="r" style="left:942.0999999999999px;top:222.2px;" width="15.8" height="15.4"><use href="#pdoc"/></svg>
<svg class="r" style="left:1185.9px;top:224px;" width="11" height="11"><use href="#gcirc"/></svg>
<svg class="r" style="left:794.8px;top:246.2px;" width="4.8" height="7.8"><use href="#arrr"/></svg>
<svg class="r" style="left:808.6px;top:244.1px;" width="13" height="11"><use href="#folder"/></svg>
<span class="t" id="t63" style="left:826.23px;top:244.00px;font-size:12.5px;line-height:14px;height:14px;color:#444;transform:scaleX(0.9017);">src</span>
<svg class="r" style="left:945.0px;top:246px;" width="10" height="8"><use href="#check"/></svg>
<svg class="r" style="left:958.0px;top:243px;" width="16" height="14"><use href="#dfolder"/></svg>
<svg class="r" style="left:1185.9px;top:244px;" width="11" height="11"><use href="#gcirc"/></svg>
<svg class="r" style="left:806px;top:261.4px;" width="17" height="17"><use href="#mfile"/></svg>
<span class="t" id="t64" style="left:826.11px;top:264.00px;font-size:12.5px;line-height:14px;height:14px;color:#444;transform:scaleX(0.9461);">rebuild_s_function...</span>
<svg class="r" style="left:945.0px;top:266px;" width="10" height="8"><use href="#check"/></svg>
<svg class="r" style="left:958.0px;top:262px;" width="16" height="16"><use href="#shortcut"/></svg>
<span class="t" id="t65" style="left:1021.55px;top:264.00px;font-size:12.5px;line-height:14px;height:14px;color:#444;transform:scaleX(0.9733);">Design</span>
<svg class="r" style="left:1185.9px;top:264px;" width="11" height="11"><use href="#gcirc"/></svg>
<svg class="r" style="left:806px;top:281.8px;" width="17" height="16"><use href="#prj"/></svg>
<span class="t" id="t66" style="left:825.75px;top:284.00px;font-size:12.5px;line-height:14px;height:14px;color:#444;transform:scaleX(0.9903);">SignalMultiplier.prj</span>
<svg class="r" style="left:942.0999999999999px;top:282.2px;" width="15.8" height="15.4"><use href="#pdoc"/></svg>
<svg class="r" style="left:1185.9px;top:284px;" width="11" height="11"><use href="#gcirc"/></svg>
<div class="r" style="left:788px;top:385px;width:501px;height:1px;background:#cbcbcb;"></div>
<span class="t" id="t67" style="left:797.90px;top:395.00px;font-size:14px;line-height:16px;height:16px;color:#222;transform:scaleX(0.9286);">Name:</span>
<span class="t" id="t68" style="left:870.80px;top:395.00px;font-size:14px;line-height:16px;height:16px;color:#222;transform:scaleX(0.9286);">Signal Multiplier</span>
<span class="t" id="t69" style="left:797.90px;top:411.00px;font-size:14px;line-height:16px;height:16px;color:#222;transform:scaleX(0.9286);">Location:</span>
<span class="t" id="t70" style="left:870.80px;top:411.00px;font-size:14px;line-height:16px;height:16px;color:#222;transform:scaleX(0.9286);">../SignalMultiplier</span>
<span class="t" id="t71" style="left:797.90px;top:427.00px;font-size:14px;line-height:16px;height:16px;color:#222;transform:scaleX(0.9286);">Type:</span>
<span class="t" id="t72" style="left:870.80px;top:427.00px;font-size:14px;line-height:16px;height:16px;color:#222;transform:scaleX(0.9286);">Relative</span>
<span class="t" id="t73" style="left:797.90px;top:443.00px;font-size:14px;line-height:16px;height:16px;color:#222;transform:scaleX(0.9286);">Description:</span>
<span class="t" id="t74" style="left:870.80px;top:443.00px;font-size:14px;line-height:16px;height:16px;color:#222;transform:scaleX(0.9286);">This component project provides reusable functionality for amplifying si</span>
<span class="t" id="t75" style="left:870.80px;top:459.00px;font-size:14px;line-height:16px;height:16px;color:#222;transform:scaleX(0.9286);">gnals.</span>
<div class="r" style="left:528px;top:508px;width:761px;height:1px;background:#cbcbcb;"></div>
<div class="r" style="left:528px;top:509px;width:761px;height:150px;background:#fff;"></div>
<span class="t" id="t76" style="left:534.42px;top:513.00px;font-size:13px;line-height:15px;height:15px;color:#222;">Command Window</span>
<svg class="r" style="left:1270px;top:515px;" width="2" height="10"><use href="#kebab"/></svg>
<div class="r" style="left:528px;top:531px;width:761px;height:1px;background:#cbcbcb;"></div>
<span class="t" id="t77" style="left:531.94px;top:538.00px;font-size:13.5px;line-height:15px;height:15px;color:#333;font-family:"Liberation Mono",monospace;transform:scaleX(0.7084);">&gt;&gt;</span>
<div class="r" style="left:0px;top:659px;width:1324px;height:35px;background:#e6e6e6;border-top:1px solid #b4b4b4;"></div>
<div class="r" style="left:8px;top:666px;width:38px;height:22px;background:#f6f6f6;border:1px solid #7c7c7c;border-radius:5px;"></div>
<div class="r" style="left:11.1px;top:669px;width:2.8px;height:15px;background:#7a7a7a;"></div>
<div class="r" style="left:15.1px;top:669px;width:2.8px;height:15px;background:#7a7a7a;"></div>
<div class="r" style="left:19.1px;top:669px;width:2.8px;height:15px;background:#7a7a7a;"></div>
<div class="r" style="left:23.1px;top:669px;width:2.8px;height:15px;background:#7a7a7a;"></div>
<svg class="r" style="left:33px;top:675px" width="8" height="4"><path d="M0.1 4H7.9L4 0Z" fill="#555"/></svg>
<div class="r" style="left:529px;top:666px;width:1px;height:22px;background:#b4b4b4;"></div>
<svg class="r" style="left:539px;top:667px;" width="19" height="19"><use href="#cmdwin"/></svg>
<div class="r" style="left:570px;top:666px;width:1px;height:22px;background:#b4b4b4;"></div>
<svg class="r" style="left:578.9px;top:675px;" width="15" height="3"><use href="#hdots"/></svg>
<div class="r" style="left:1289px;top:149px;width:1px;height:510px;background:#b0b0b0;"></div>
<div class="r" style="left:527px;top:149px;width:1px;height:510px;background:#b4b4b4;"></div>
<div class="r" style="left:34px;top:149px;width:1px;height:510px;background:#b0b0b0;"></div>
</body></html>
